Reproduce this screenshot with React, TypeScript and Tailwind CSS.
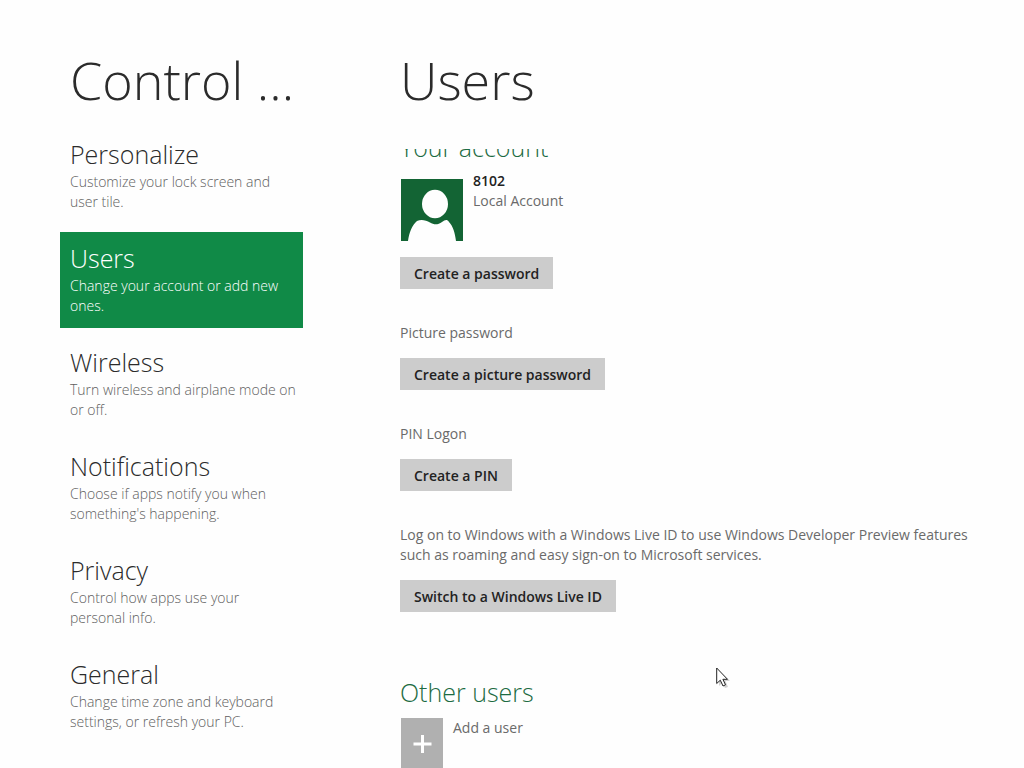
type Category = { title: string; description: string; active?: boolean };

const categories: Category[] = [
  { title: "Personalize", description: "Customize your lock screen and user tile." },
  { title: "Users", description: "Change your account or add new ones.", active: true },
  { title: "Wireless", description: "Turn wireless and airplane mode on or off." },
  { title: "Notifications", description: "Choose if apps notify you when something's happening." },
  { title: "Privacy", description: "Control how apps use your personal info." },
  { title: "General", description: "Change time zone and keyboard settings, or refresh your PC." },
];

function CategoryLink({ title, description, active }: Category) {
  return (
    <a
      href={"#" + title.toLowerCase()}
      aria-current={active ? "page" : undefined}
      className={
        active
          ? "block bg-[#108a47] pt-2.5 pr-1.5 pb-3 pl-2.5 text-white"
          : "block pt-2.5 pr-1.5 pb-3 pl-2.5 text-[#2b2b2b]"
      }
    >
      <span className="block text-[25px] leading-8 font-light">{title}</span>
      <span
        className={
          active
            ? "mt-0.5 block text-sm leading-5 font-light"
            : "mt-0.5 block text-sm leading-5 font-light text-[#606060]"
        }
      >
        {description}
      </span>
    </a>
  );
}

function ActionButton({ label }: { label: string }) {
  return (
    <button
      type="button"
      className="h-8 self-start bg-[#cccccc] px-3.5 pt-0.5 text-sm font-semibold text-[#222222]"
    >
      {label}
    </button>
  );
}

function UserTile() {
  return (
    <svg viewBox="0 0 62 62" className="size-[62px] shrink-0" aria-hidden="true">
      <rect width="62" height="62" fill="#136434" />
      <ellipse cx="34" cy="25" rx="13" ry="14.3" fill="#fefefe" />
      <path
        d="M7 62C8 54 11 46 16 42C20 40 25 41 29 43.500C33 46 37 46 41 43C44 41 46 40 48 43C52 47 54 54 55 62Z"
        fill="#fefefe"
      />
    </svg>
  );
}

function Pointer() {
  return (
    <svg
      viewBox="0 0 16 22"
      className="pointer-events-none absolute top-[667px] left-[716px] h-[22px] w-4"
      aria-hidden="true"
    >
      <path d="M3 4V19L6 16L9 21L12 20L9.500 14H14Z" fill="#000000" opacity="0.18" />
      <path
        d="M0.700 1V16.500L4.300 13.200L7 19L9.500 17.800L6.900 12.300H11.500Z"
        fill="#ffffff"
        stroke="#222222"
        strokeWidth="1"
        strokeLinejoin="round"
      />
    </svg>
  );
}

export default function App() {
  return (
    <div className="relative flex h-screen overflow-hidden bg-[#fefefe] pl-[60px] font-['Open_Sans','Noto_Sans',sans-serif] text-[#2b2b2b]">
      <aside className="w-[243px] shrink-0">
        <h1 className="mt-11 mb-3 px-2.5 text-[52px] leading-[72px] font-light whitespace-nowrap">
          Control ...
        </h1>
        <nav aria-label="Settings categories" className="flex flex-col gap-2">
          {categories.map((category) => (
            <CategoryLink key={category.title} {...category} />
          ))}
        </nav>
      </aside>

      <main className="ml-[97px] flex min-w-0 flex-1 flex-col pr-10">
        <h1 className="mt-11 mb-[33px] shrink-0 text-[52px] leading-[72px] font-light">Users</h1>
        <div className="min-h-0 flex-1 overflow-hidden">
          <div className="-mt-[18px] flex flex-col text-sm leading-5 text-[#6a6a6a]">
            <h2 className="text-[25px] leading-8 font-light text-[#1c6b42]">Your account</h2>
            <div className="mt-4 flex gap-2.5 pl-px">
              <UserTile />
              <div>
                <p className="-mt-2 font-semibold text-[#222222]">8102</p>
                <p>Local Account</p>
              </div>
            </div>
            <div className="mt-4 flex flex-col">
              <ActionButton label="Create a password" />
            </div>
            <section className="mt-[34px] flex flex-col gap-[15px]">
              <p>Picture password</p>
              <ActionButton label="Create a picture password" />
            </section>
            <section className="mt-[34px] flex flex-col gap-[15px]">
              <p>PIN Logon</p>
              <ActionButton label="Create a PIN" />
            </section>
            <section className="mt-[34px] flex flex-col gap-[15px]">
              <p>
                Log on to Windows with a Windows Live ID to use Windows Developer Preview features
                such as roaming and easy sign-on to Microsoft services.
              </p>
              <ActionButton label="Switch to a Windows Live ID" />
            </section>
            <h2 className="mt-16 text-[25px] leading-8 font-light text-[#1c6b42]">Other users</h2>
            <button type="button" className="mt-2.5 flex items-start gap-2.5 self-start pl-px">
              <svg viewBox="0 0 42 50" className="h-[50px] w-[42px]" aria-hidden="true">
                <rect width="42" height="50" fill="#b0b0b0" />
                <path d="M21.500 17V35M12.500 26H30.500" stroke="#ffffff" strokeWidth="3" />
              </svg>
              <span>Add a user</span>
            </button>
          </div>
        </div>
      </main>
      <Pointer />
    </div>
  );
}
